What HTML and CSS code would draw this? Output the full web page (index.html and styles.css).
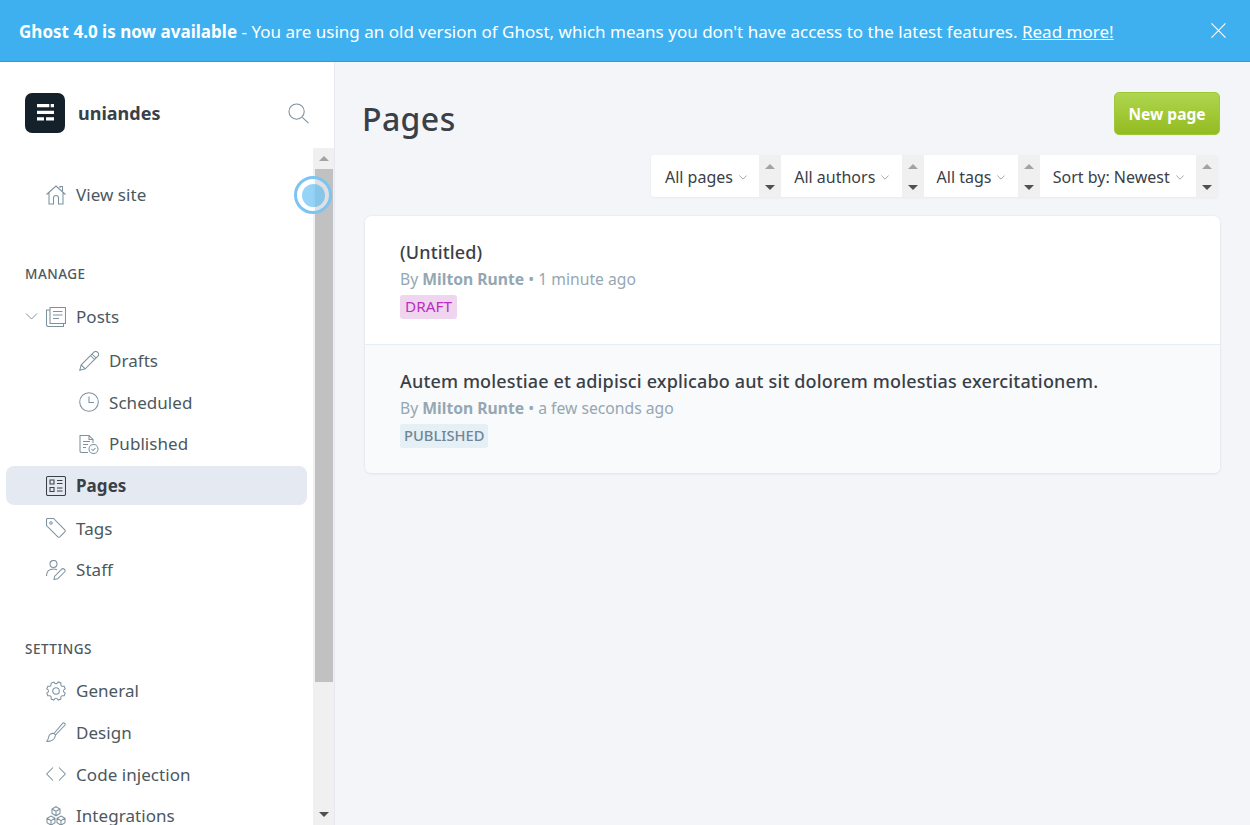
FILE: index.html
```html
<!DOCTYPE html>
<html lang="en">
<head>
<meta charset="utf-8">
<title>Pages - uniandes</title>
<link rel="stylesheet" href="styles.css">
</head>
<body>
<div class="banner">
  <p class="banner-text"><strong>Ghost 4.0 is now available</strong> - You are using an old version of Ghost, which means you don't have access to the latest features. <a href="#">Read more!</a></p>
  <svg class="banner-close" viewBox="0 0 16 16"><path d="M.5.5l15 15M15.500.5l-15 15"/></svg>
</div>
<div class="shell">
  <aside class="sidebar">
    <header class="brand">
      <div class="logo"><svg viewBox="0 0 40 40"><path d="M12 11h12.300v3.300H12zM25.700 11H29v3.300h-3.300zM12 17.700h17V21H12zM12 24.300h7v3.300h-7zM21 24.300h8v3.300h-8z"/></svg></div>
      <span class="brand-name">uniandes</span>
      <svg class="search" viewBox="0 0 22 22"><circle cx="9" cy="9" r="8"/><path d="M15 15l6.500 6"/></svg>
    </header>
    <div class="nav-wrap">
      <nav class="nav">
        <a class="item view-site"><svg class="ic" viewBox="0 0 20 20"><path d="M.5 9.500L10 1l9.500 8.500M3 8v11h4.500v-6a2.500 2.500 0 0 1 5 0v6H17V8M14 3V1.500h2.500V6"/></svg>View site</a>
        <h3 class="section first">MANAGE</h3>
        <a class="item"><svg class="chev" viewBox="0 0 12 7"><path d="M.5.500L6 6l5.500-5.500"/></svg><svg class="ic" viewBox="0 0 20 20"><path d="M4 .5h15.500v16H4zM4 3H.500v14.500a2 2 0 0 0 2 2h15v-3M7 4.500h9.500M7 8h9.500M7 11.500h6"/></svg>Posts</a>
        <a class="item sub sub-first"><svg class="ic" viewBox="0 0 20 20"><path d="M.8 19.200l1.400-5.400L14.700 1.300a2.500 2.500 0 0 1 4 4L6.200 17.800zM2.200 13.800l4 4M13 3l4 4M11.500 4.500l4 4"/></svg>Drafts</a>
        <a class="item sub"><svg class="ic" viewBox="0 0 20 20"><circle cx="10" cy="10" r="9.300"/><path d="M10 4.500V10.500h5"/></svg>Scheduled</a>
        <a class="item sub"><svg class="ic" viewBox="0 0 20 20"><path d="M9 18.500H2.500a1.500 1.500 0 0 1-1.500-1.500V1.500h9l4 4v3.500M10 1.500v4h4M4 7.500h7M4 10.500h5M4 13.500h3"/><circle cx="14.500" cy="15" r="4.500"/><path d="M12.500 15l1.500 1.500 2.500-2.500"/></svg>Published</a>
        <a class="item active"><svg class="ic" viewBox="0 0 20 20"><rect x=".5" y=".5" width="19" height="19" rx="1.500"/><path d="M4 4h4v4H4zM4 11.500h4v4H4zM11 4.500h5.500M11 7.500h5.500M11 12h5.500M11 15h5.500"/></svg>Pages</a>
        <a class="item"><svg class="ic" viewBox="0 0 20 20"><path d="M.5 1.500a1 1 0 0 1 1-1h6l11.300 11.300a1.500 1.500 0 0 1 0 2l-5 5a1.500 1.500 0 0 1-2 0L.5 7.500z"/><circle cx="5" cy="5" r="1.300"/></svg>Tags</a>
        <a class="item"><svg class="ic" viewBox="0 0 20 20"><circle cx="7.500" cy="4" r="3.500"/><path d="M.5 16c0-4 1.500-7 7-7 1.500 0 2.500.3 3.500.7M8 19.500l.7-3.300 6.800-6.800a1.800 1.800 0 0 1 3 2.600l-6.800 6.800z"/></svg>Staff</a>
        <h3 class="section">SETTINGS</h3>
        <a class="item"><svg class="ic" viewBox="0 0 20 20"><circle cx="10" cy="10" r="3.300"/><path d="M8.300 1.500a1.800 1.800 0 0 0 3.400 0l.6-.6 2.500 1 .1 1a1.800 1.800 0 0 0 2.300 2.300l1 .1 1 2.500-.7.6a1.800 1.800 0 0 0 0 3.200l.7.600-1 2.500-1 .1a1.800 1.800 0 0 0-2.300 2.300l-.1 1-2.500 1-.6-.7a1.800 1.800 0 0 0-3.400 0l-.6.700-2.500-1-.1-1a1.800 1.800 0 0 0-2.300-2.300l-1-.1-1-2.500.7-.6a1.800 1.800 0 0 0 0-3.200l-.7-.6 1-2.500 1-.1A1.800 1.800 0 0 0 5.100 3l.1-1 2.500-1z"/></svg>General</a>
        <a class="item"><svg class="ic" viewBox="0 0 20 20"><path d="M8 11.500L17 1a1.500 1.500 0 0 1 2 2L9.500 13zM8 11.500c-3-.5-5 1-5.300 3.500-.2 1.800-1 3-2 4.300 4 .5 8.500-1.500 8.800-6.300"/></svg>Design</a>
        <a class="item"><svg class="ic" viewBox="0 0 20 20"><path d="M7 3.500L.7 10 7 16.500M13 3.500l6.300 6.500-6.300 6.500"/></svg>Code injection</a>
        <a class="item"><svg class="ic" viewBox="0 0 20 20"><path d="M10 .7l4 2.300v4.500l-4 2.300-4-2.300V3zM6 3l4 2.300L14 3M10 5.300V9.800M5 10l4 2.300v4.500l-4 2.300-4-2.300v-4.500zM1 12.300l4 2.300 4-2.300M5 14.600v4.500M15 10l4 2.300v4.500l-4 2.300-4-2.300v-4.500zM11 12.300l4 2.300 4-2.300M15 14.600v4.500"/></svg>Integrations</a>
      </nav>
      <div class="scrollbar">
        <span class="sb-btn"><i class="tri up light"></i></span>
        <span class="sb-track"><span class="sb-thumb"></span></span>
        <span class="sb-btn"><i class="tri down"></i></span>
      </div>
      <span class="pulse"><span class="pulse-dot"></span></span>
    </div>
  </aside>
  <main class="main">
    <div class="head">
      <h1>Pages</h1>
      <a class="btn-new">New page</a>
    </div>
    <div class="filters">
      <div class="filter"><span class="f-label">All pages<svg class="f-chev" viewBox="0 0 12 7"><path d="M.5.500L6 6l5.500-5.500"/></svg></span><span class="spin"><i class="tri up light"></i><i class="tri down"></i></span></div>
      <div class="filter"><span class="f-label">All authors<svg class="f-chev" viewBox="0 0 12 7"><path d="M.5.500L6 6l5.500-5.500"/></svg></span><span class="spin"><i class="tri up light"></i><i class="tri down"></i></span></div>
      <div class="filter"><span class="f-label">All tags<svg class="f-chev" viewBox="0 0 12 7"><path d="M.5.500L6 6l5.500-5.500"/></svg></span><span class="spin"><i class="tri up light"></i><i class="tri down"></i></span></div>
      <div class="filter"><span class="f-label">Sort by: Newest<svg class="f-chev" viewBox="0 0 12 7"><path d="M.5.500L6 6l5.500-5.500"/></svg></span><span class="spin"><i class="tri up light"></i><i class="tri down"></i></span></div>
    </div>
    <section class="list">
      <article class="row">
        <h2>(Untitled)</h2>
        <p class="meta">By <b>Milton Runte</b> • 1 minute ago</p>
        <span class="tag draft">DRAFT</span>
      </article>
      <article class="row alt">
        <h2>Autem molestiae et adipisci explicabo aut sit dolorem molestias exercitationem.</h2>
        <p class="meta">By <b>Milton Runte</b> • a few seconds ago</p>
        <span class="tag published">PUBLISHED</span>
      </article>
    </section>
  </main>
</div>
</body>
</html>
```
FILE: styles.css
```css
* { box-sizing: border-box; }
html, body { margin: 0; height: 100%; overflow: hidden; }
body { font-family: "Noto Sans", "Open Sans", sans-serif; color: #394047; background: #f4f5f8; display: flex; flex-direction: column; }
svg { display: block; fill: none; }
h1, h2, h3, p { margin: 0; }

.banner { height: 62px; flex: none; background: #3eb0ef; border-bottom: 1px solid #2a9be0; color: #fff; display: flex; align-items: center; padding: 1px 24px 0 19px; justify-content: space-between; }
.banner-text { font-size: 17px; letter-spacing: .015px; white-space: nowrap; }
.banner-text strong { font-weight: 700; }
.banner-text a { color: #fff; text-decoration: underline; }
.banner-close { width: 15px; height: 15px; margin-bottom: 2px; stroke: #fff; stroke-width: 1.200; }

.shell { flex: 1; display: flex; min-height: 0; }
.sidebar { width: 335px; flex: none; background: #fff; border-right: 1px solid #e5e9ef; display: flex; flex-direction: column; min-height: 0; }
.brand { height: 86px; flex: none; display: flex; align-items: flex-start; padding: 31px 25px 0 25px; }
.logo { width: 40px; height: 40px; border-radius: 7px; background: #15212a; }
.logo svg { width: 40px; height: 40px; fill: #fff; }
.brand-name { font-weight: 700; font-size: 18px; line-height: 40px; margin-left: 13px; flex: 1; color: #394047; }
.search { width: 21px; height: 21px; margin-top: 10px; stroke: #7d8f9c; stroke-width: 1.100; }

.nav-wrap { flex: 1; min-height: 0; display: flex; position: relative; }
.nav { flex: 1; overflow: hidden; padding: 27px 6px 0 6px; }
.item { display: flex; align-items: center; height: 39px; margin-bottom: 2.600px; padding-left: 40px; position: relative; font-size: 17px; letter-spacing: .05px; color: #4b5860; }
.item .ic { width: 20px; height: 20px; stroke: #7d929f; stroke-width: 1.050; margin-right: 10px; flex: none; }
.chev { position: absolute; left: 19px; top: 16px; width: 13px; height: 7px; stroke: #7d929f; stroke-width: 1; }
.sub { padding-left: 73px; }
.sub-first { margin-top: 5px; }
.active { background: #e5eaf2; border-radius: 8px; font-weight: 700; color: #394047; padding-left: 40px; margin-top: 3px; margin-bottom: 3.600px; }
.active .ic { stroke: #394047; }
.section { font-size: 13.500px; font-weight: 500; letter-spacing: .5px; color: #4b5860; padding-left: 19px; height: 20px; line-height: 20px; margin: 50px 0 12px; }
.section.first { margin: 50px 0 13px; }

.scrollbar { width: 21px; flex: none; background: #f0f0f0; display: flex; flex-direction: column; }
.sb-btn { height: 21px; flex: none; display: flex; align-items: center; justify-content: center; }
.sb-track { flex: 1; padding: 0 1px 0 2px; }
.sb-thumb { display: block; height: 513px; background: #c1c1c1; }
.tri { display: block; width: 0; height: 0; border-left: 5px solid transparent; border-right: 5px solid transparent; }
.tri.up { border-bottom: 5px solid #505050; }
.tri.up.light { border-bottom-color: #a3a3a3; }
.tri.down { border-top: 5px solid #505050; }

.pulse { position: absolute; left: 294px; top: 28px; width: 38px; height: 38px; border-radius: 50%; border: 3px solid #7cc4f2; display: flex; align-items: center; justify-content: center; background: rgba(255,255,255,.5); }
.pulse-dot { width: 23px; height: 23px; border-radius: 50%; background: rgba(62,176,239,.55); }

.main { flex: 1; min-width: 0; padding: 30px 30px 0 27px; }
.head { display: flex; justify-content: space-between; align-items: flex-start; height: 63px; }
.head h1 { font-size: 32px; font-weight: 500; letter-spacing: .4px; line-height: 44px; color: #394047; margin-top: 5px; }
.btn-new { width: 106px; height: 43px; border-radius: 5px; background: linear-gradient(#aed64f, #94bb20); border: 1px solid #a0c63a; color: #fff; font-weight: 700; font-size: 15.500px; display: flex; align-items: center; justify-content: center; }
.filters { display: flex; height: 42px; width: fit-content; margin: 0 2px 0 auto; border-radius: 4px; overflow: hidden; box-shadow: 0 1px 3px rgba(0,0,0,.05); }
.filter { display: flex; height: 42px; }
.f-label { background: #fff; display: flex; align-items: center; padding: 2px 12.500px 0 13px; font-size: 16px; color: #394047; white-space: nowrap; }
.f-chev { width: 8px; height: 5px; margin-left: 6px; stroke: #8e9ba5; stroke-width: 1.300; }
.filter:first-child .f-label { padding-left: 13.750px; }
.spin { width: 21.750px; background: #f0f0f0; display: flex; flex-direction: column; align-items: center; justify-content: space-between; padding: 9px 0 7px; }
.list { margin: 19px 0 0 3px; background: #fff; border-radius: 6px; box-shadow: 0 0 2px rgba(0,0,0,.08), 0 1px 3px rgba(0,0,0,.06); overflow: hidden; }
.row { height: 128px; padding: 22px 35px 0; }
.row.alt { background: #f9fafb; border-top: 1px solid #e5eef5; height: 129px; }
.row h2 { font-size: 18px; letter-spacing: .15px; font-weight: 500; line-height: 28px; color: #394047; }
.meta { font-size: 15.700px; line-height: 26px; color: #95a7b3; }
.meta b { font-weight: 700; }
.tag { display: inline-block; font-size: 14.700px; line-height: 23px; height: 24px; padding: 0 4px; border-radius: 3px; margin-top: 3px; }
.draft { background: #f0d5ef; color: #b92fc1; font-size: 15.300px; padding: 0 5px; }
.published { background: #e5eff6; color: #6f8695; font-weight: 500; }
```
